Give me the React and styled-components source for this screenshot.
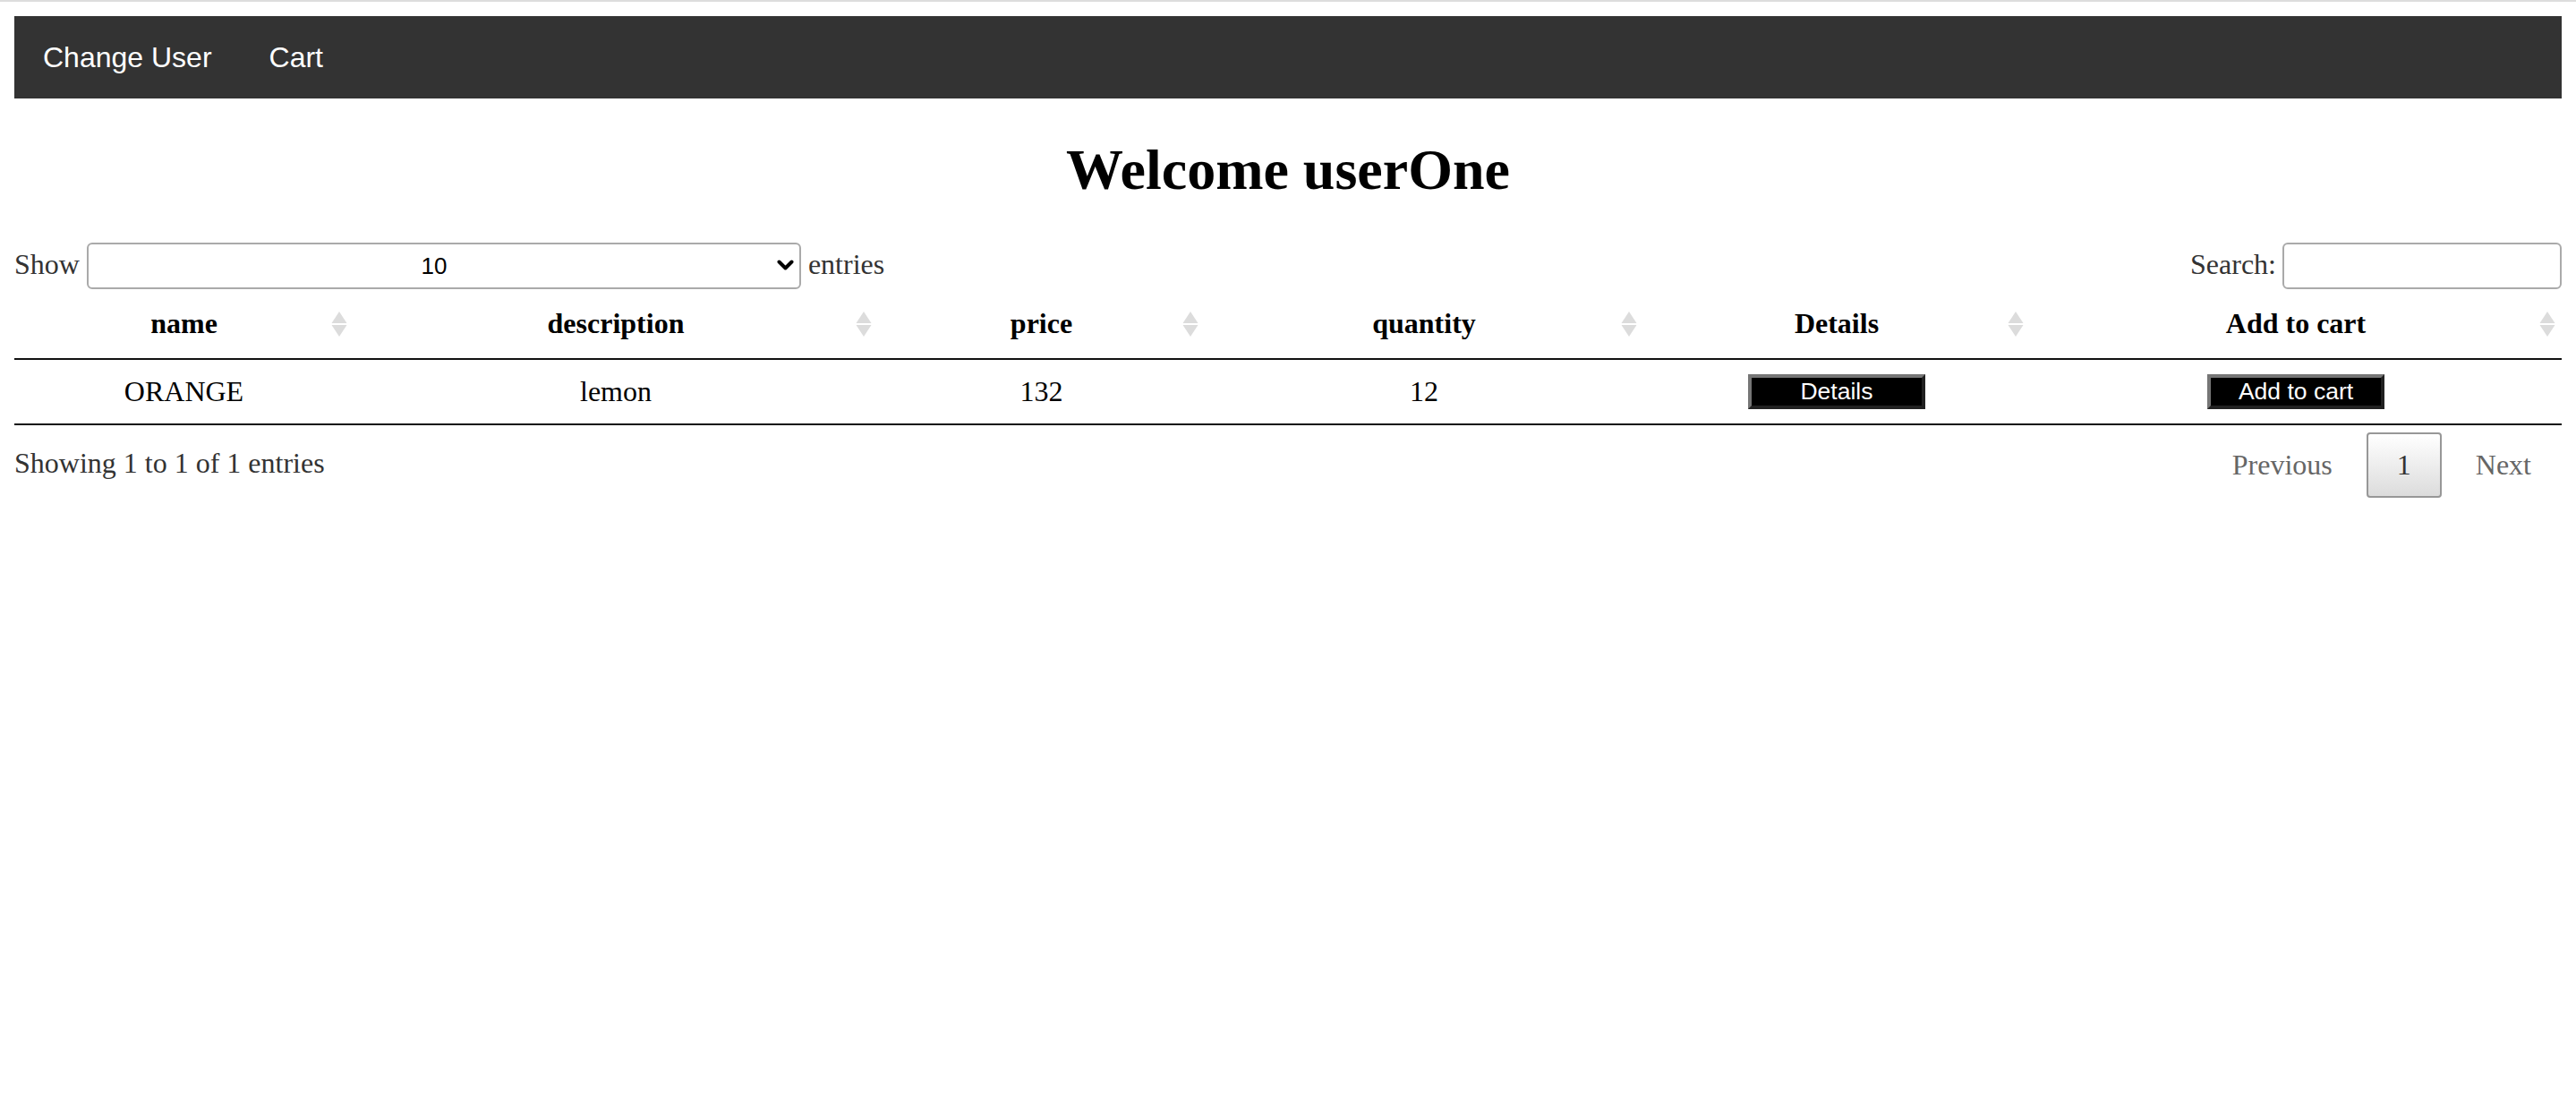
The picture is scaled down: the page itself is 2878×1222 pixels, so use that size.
import React from 'react';
import styled, { createGlobalStyle } from 'styled-components';

const GlobalStyle = createGlobalStyle`
  * { box-sizing: border-box; }
  html {
    border-top: 2px solid #dddddd;
    background: #ffffff;
  }
  body {
    margin: 16px;
    font-family: "Liberation Serif", "Times New Roman", serif;
    font-size: 32px;
    color: #000000;
  }
`;

const Page = styled.div`
  display: flex;
  flex-direction: column;
`;

const NavBar = styled.ul`
  list-style: none;
  margin: 0;
  padding: 0;
  display: flex;
  background: #333333;
  font-family: "Liberation Sans", Arial, sans-serif;
`;

const NavItem = styled.li`
  display: block;
`;

const NavLink = styled.a`
  display: block;
  color: #ffffff;
  text-align: center;
  padding: 28px 32px;
  font-size: 32px;
  line-height: 36px;
  text-decoration: none;
`;

const Title = styled.h1`
  font-size: 64px;
  font-weight: bold;
  text-align: center;
  line-height: normal;
  margin: 43px 0 44px;
`;

const Controls = styled.div`
  display: flex;
  justify-content: space-between;
  align-items: flex-start;
  color: #333333;
`;

const ControlLabel = styled.label`
  display: block;
  white-space: nowrap;
  line-height: normal;
`;

const SelectWrap = styled.span`
  position: relative;
  display: inline-block;
`;

const LengthSelect = styled.select`
  appearance: none;
  -webkit-appearance: none;
  width: 798px;
  height: 52px;
  border: 2px solid #aaaaaa;
  border-radius: 6px;
  padding: 0 30px 0 8px;
  background: transparent;
  font-family: "Liberation Sans", Arial, sans-serif;
  font-size: 26px;
  color: #000000;
  text-align: center;
  text-align-last: center;
`;

const Chevron = styled.svg`
  position: absolute;
  right: 8px;
  top: 19px;
  width: 19px;
  height: 13px;
  pointer-events: none;
`;

const SearchInput = styled.input`
  width: 312px;
  height: 52px;
  margin-left: 7px;
  border: 2px solid #aaaaaa;
  border-radius: 6px;
  padding: 10px;
  background: transparent;
  font-family: "Liberation Sans", Arial, sans-serif;
  font-size: 26px;
`;

const Table = styled.table`
  width: 100%;
  table-layout: fixed;
  border-collapse: separate;
  border-spacing: 0;
  border-bottom: 2px solid #111111;
`;

const Th = styled.th`
  position: relative;
  width: ${(p) => p.$w}px;
  padding: 20px 36px;
  border-bottom: 2px solid #111111;
  font-weight: bold;
  text-align: center;
  line-height: normal;
  white-space: nowrap;
`;

const SortIcon = styled.svg`
  position: absolute;
  right: 7px;
  top: 50%;
  width: 18px;
  height: 28px;
  transform: translateY(-50%);
`;

const Td = styled.td`
  padding: 16px 20px;
  text-align: center;
  vertical-align: middle;
  line-height: normal;
`;

const ActionButton = styled.button`
  display: inline-block;
  vertical-align: top;
  width: 198px;
  height: 39px;
  padding: 0 8px;
  background: #000000;
  color: #ffffff;
  border: 4px outset #767676;
  font-family: "Liberation Sans", Arial, sans-serif;
  font-size: 26.5px;
  line-height: 1;
`;

const Footer = styled.div`
  display: flex;
  justify-content: space-between;
  align-items: flex-start;
  color: #333333;
`;

const Info = styled.div`
  padding-top: 24px;
  line-height: normal;
`;

const Paginate = styled.div`
  display: flex;
  padding-top: 8px;
`;

const PageButton = styled.a`
  display: inline-block;
  min-width: 48px;
  margin-left: 4px;
  padding: 16px 32px;
  line-height: normal;
  text-align: center;
  border-radius: 4px;
  border: 2px solid ${(p) => (p.$current ? '#979797' : 'transparent')};
  background: ${(p) =>
    p.$current ? 'linear-gradient(to bottom, #ffffff 0%, #dcdcdc 100%)' : 'transparent'};
  color: ${(p) => (p.$disabled ? '#666666' : '#333333')};
  cursor: default;
  text-decoration: none;
`;

const columns = [
  { label: 'name', w: 379 },
  { label: 'description', w: 586 },
  { label: 'price', w: 365 },
  { label: 'quantity', w: 490 },
  { label: 'Details', w: 432 },
  { label: 'Add to cart', w: 594 },
];

function SortArrows() {
  return (
    <SortIcon viewBox="0 0 18 28" aria-hidden="true">
      <path d="M9 0 L17.5 13 L0.5 13 Z" fill="#dcdcdc" />
      <path d="M0.5 15 L17.5 15 L9 28 Z" fill="#dcdcdc" />
    </SortIcon>
  );
}

export default function App() {
  return (
    <>
      <GlobalStyle />
      <Page>
        <NavBar>
          <NavItem>
            <NavLink href="#">Change User</NavLink>
          </NavItem>
          <NavItem>
            <NavLink href="#">Cart</NavLink>
          </NavItem>
        </NavBar>

        <Title>Welcome userOne</Title>

        <Controls>
          <ControlLabel>
            Show{' '}
            <SelectWrap>
              <LengthSelect defaultValue="10">
                <option value="10">10</option>
                <option value="25">25</option>
                <option value="50">50</option>
                <option value="100">100</option>
              </LengthSelect>
              <Chevron viewBox="0 0 19 13" aria-hidden="true">
                <path
                  d="M2.5 2.5 L9.5 9.5 L16.5 2.5"
                  fill="none"
                  stroke="#000"
                  strokeWidth="4"
                  strokeLinecap="round"
                  strokeLinejoin="round"
                />
              </Chevron>
            </SelectWrap>{' '}
            entries
          </ControlLabel>
          <ControlLabel>
            Search:
            <SearchInput type="search" />
          </ControlLabel>
        </Controls>

        <Table>
          <thead>
            <tr>
              {columns.map((c) => (
                <Th key={c.label} $w={c.w}>
                  {c.label}
                  <SortArrows />
                </Th>
              ))}
            </tr>
          </thead>
          <tbody>
            <tr>
              <Td>ORANGE</Td>
              <Td>lemon</Td>
              <Td>132</Td>
              <Td>12</Td>
              <Td>
                <ActionButton>Details</ActionButton>
              </Td>
              <Td>
                <ActionButton>Add to cart</ActionButton>
              </Td>
            </tr>
          </tbody>
        </Table>

        <Footer>
          <Info>Showing 1 to 1 of 1 entries</Info>
          <Paginate>
            <PageButton $disabled>Previous</PageButton>
            <PageButton $current>1</PageButton>
            <PageButton $disabled>Next</PageButton>
          </Paginate>
        </Footer>
      </Page>
    </>
  );
}
